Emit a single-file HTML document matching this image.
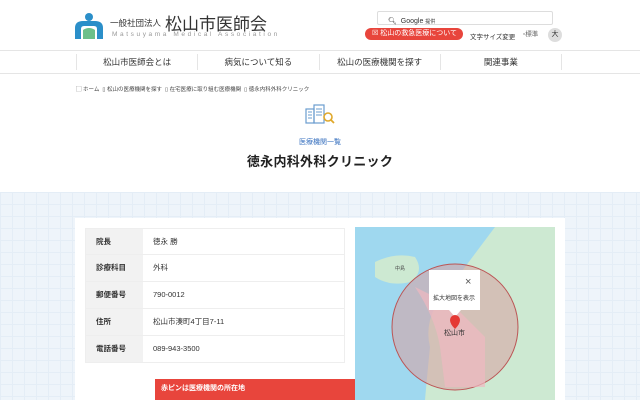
<!DOCTYPE html>
<html><head><meta charset="utf-8">
<style>
*{margin:0;padding:0;box-sizing:border-box}
body{width:640px;height:400px;overflow:hidden;background:#fff;font-family:"Liberation Sans","Noto Sans CJK JP",sans-serif;color:#333;position:relative}
.a{position:absolute;white-space:nowrap}
</style></head><body>
<!-- logo -->
<svg class="a" style="left:74px;top:12px" width="30" height="28" viewBox="0 0 30 28">
<circle cx="15" cy="5" r="4" fill="#2b8fc9"/>
<path d="M1 27 V16 Q1 9 9 9 H21 Q29 9 29 16 V27 H23 V17 Q23 14 20 14 H10 Q7 14 7 17 V27Z" fill="#2b8fc9"/>
<path d="M9 27 V18 Q15 14 21 18 V27Z" fill="#6cc08a"/>
</svg>
<div class="a" style="left:110px;top:17px;font-size:8.5px;color:#333">一般社団法人</div>
<div class="a" style="left:165px;top:10px;font-size:17px;color:#333">松山市医師会</div>
<div class="a" style="left:112px;top:31px;font-size:6.5px;letter-spacing:2.6px;color:#999">Matsuyama Medical Association</div>
<div class="a" style="left:377px;top:11px;width:176px;height:14px;border:1px solid #ddd;border-radius:2px"></div>
<div class="a" style="left:388px;top:17px;font-size:7px;color:#333">&#x1F50D;︎ &nbsp;Google <span style="font-size:5px">提供</span></div>
<div class="a" style="left:365px;top:28px;width:98px;height:12px;background:#e8453c;border-radius:6px;color:#fff;font-size:7px;line-height:12px;padding-left:7px">☒ 松山の救急医療について</div>
<div class="a" style="left:470px;top:31px;font-size:6.5px">文字サイズ変更</div>
<div class="a" style="left:523px;top:28px;font-size:6.5px;color:#666">▫標準</div>
<div class="a" style="left:548px;top:28px;width:14px;height:14px;border-radius:7px;background:#ddd;font-size:7px;line-height:14px;text-align:center">大</div>
<!-- nav -->
<div class="a" style="left:0;top:50px;width:640px;height:24px;border-top:1px solid #e5e5e5;border-bottom:1px solid #e5e5e5"></div>
<div class="a" style="left:76px;top:54px;width:486px;height:16px;display:flex;font-size:8.5px;color:#333">
<div style="flex:1;text-align:center;line-height:16px;border-left:1px solid #e5e5e5">松山市医師会とは</div>
<div style="flex:1;text-align:center;line-height:16px;border-left:1px solid #e5e5e5">病気について知る</div>
<div style="flex:1;text-align:center;line-height:16px;border-left:1px solid #e5e5e5">松山の医療機関を探す</div>
<div style="flex:1;text-align:center;line-height:16px;border-left:1px solid #e5e5e5;border-right:1px solid #e5e5e5">関連事業</div>
</div>
<div class="a" style="left:76px;top:85px;font-size:5.5px;color:#444">▢ ホーム &nbsp;▯ 松山の医療機関を探す &nbsp;▯ 在宅医療に取り組む医療機関 &nbsp;▯ 徳永内科外科クリニック</div>
<!-- icon -->
<svg class="a" style="left:304px;top:103px" width="32" height="22" viewBox="0 0 32 22">
<rect x="2" y="6" width="8" height="14" fill="none" stroke="#6a9ccf" stroke-width="1.2"/>
<rect x="10" y="2" width="10" height="18" fill="none" stroke="#6a9ccf" stroke-width="1.2"/>
<path d="M4 9h4M4 12h4M4 15h4M12 6h6M12 9h6M12 12h6" stroke="#6a9ccf"/>
<circle cx="24" cy="14" r="4" fill="none" stroke="#e0a82a" stroke-width="1.6"/>
<path d="M27 17l3 3" stroke="#e0a82a" stroke-width="1.8"/>
</svg>
<div class="a" style="left:0;width:640px;text-align:center;top:137px;font-size:7px;color:#3b73c0">医療機関一覧</div>
<div class="a" style="left:0;width:640px;text-align:center;top:151px;font-size:13px;font-weight:bold;color:#222;letter-spacing:0.3px">徳永内科外科クリニック</div>
<!-- bg -->
<div class="a" style="left:0;top:192px;width:640px;height:208px;background:#eef4fa;background-image:linear-gradient(#e4edf6 1px,transparent 1px),linear-gradient(90deg,#e4edf6 1px,transparent 1px);background-size:12px 12px"></div>
<div class="a" style="left:75px;top:218px;width:490px;height:182px;background:#fff"></div>
<!-- table -->
<div class="a" style="left:85px;top:228px;width:260px;font-size:7.5px">
<div style="display:flex;height:27px;border:1px solid #eee"><div style="width:57px;background:#f2f2f2;font-weight:bold;padding-left:10px;line-height:25px">院長</div><div style="padding-left:10px;line-height:25px">徳永 勝</div></div>
<div style="display:flex;height:27px;border:1px solid #eee;border-top:0"><div style="width:57px;background:#f2f2f2;font-weight:bold;padding-left:10px;line-height:26px">診療科目</div><div style="padding-left:10px;line-height:26px">外科</div></div>
<div style="display:flex;height:27px;border:1px solid #eee;border-top:0"><div style="width:57px;background:#f2f2f2;font-weight:bold;padding-left:10px;line-height:26px">郵便番号</div><div style="padding-left:10px;line-height:26px">790-0012</div></div>
<div style="display:flex;height:27px;border:1px solid #eee;border-top:0"><div style="width:57px;background:#f2f2f2;font-weight:bold;padding-left:10px;line-height:26px">住所</div><div style="padding-left:10px;line-height:26px">松山市湊町4丁目7-11</div></div>
<div style="display:flex;height:27px;border:1px solid #eee;border-top:0"><div style="width:57px;background:#f2f2f2;font-weight:bold;padding-left:10px;line-height:26px">電話番号</div><div style="padding-left:10px;line-height:26px">089-943-3500</div></div>
</div>
<div class="a" style="left:155px;top:379px;width:200px;height:21px;background:#e8453c;color:#fff;font-size:7px;font-weight:bold;padding:4px 6px">赤ピンは医療機関の所在地</div>
<!-- map -->
<svg class="a" style="left:355px;top:227px" width="200" height="173" viewBox="0 0 200 173">
<rect width="200" height="173" fill="#9fd8ef"/>
<path d="M200 0 H140 Q125 20 110 40 Q95 60 80 80 Q70 100 75 120 Q72 150 70 173 H200Z" fill="#cde9d2"/>
<path d="M20 35 Q40 25 60 30 Q70 45 55 55 Q35 60 20 50Z" fill="#cde9d2"/>
<circle cx="100" cy="100" r="63" fill="#d9a0a0" fill-opacity=".55" stroke="#b55" stroke-width="1"/>
<path d="M60 60 Q80 90 85 120 L90 160 L130 160 L130 110 Q110 90 100 80Z" fill="#f0b8c0" opacity=".7"/>
<rect x="74" y="43" width="51" height="40" fill="#fff"/>
<polygon points="94,83 106,83 100,90" fill="#fff"/>
<text x="110" y="58" font-size="11" fill="#555" font-family="Liberation Sans">×</text>
<text x="78" y="73" font-size="6" fill="#333" font-family="Noto Sans CJK JP">拡大地図を表示</text>
<path d="M105 93 a5 5 0 1 0 -10 0 q0 4 5 9 q5 -5 5 -9z" fill="#e53935"/>
<text x="89" y="108" font-size="7" fill="#333" font-family="Noto Sans CJK JP">松山市</text>
<text x="40" y="43" font-size="5" fill="#444" font-family="Noto Sans CJK JP">中島</text>
</svg>
</body></html>
